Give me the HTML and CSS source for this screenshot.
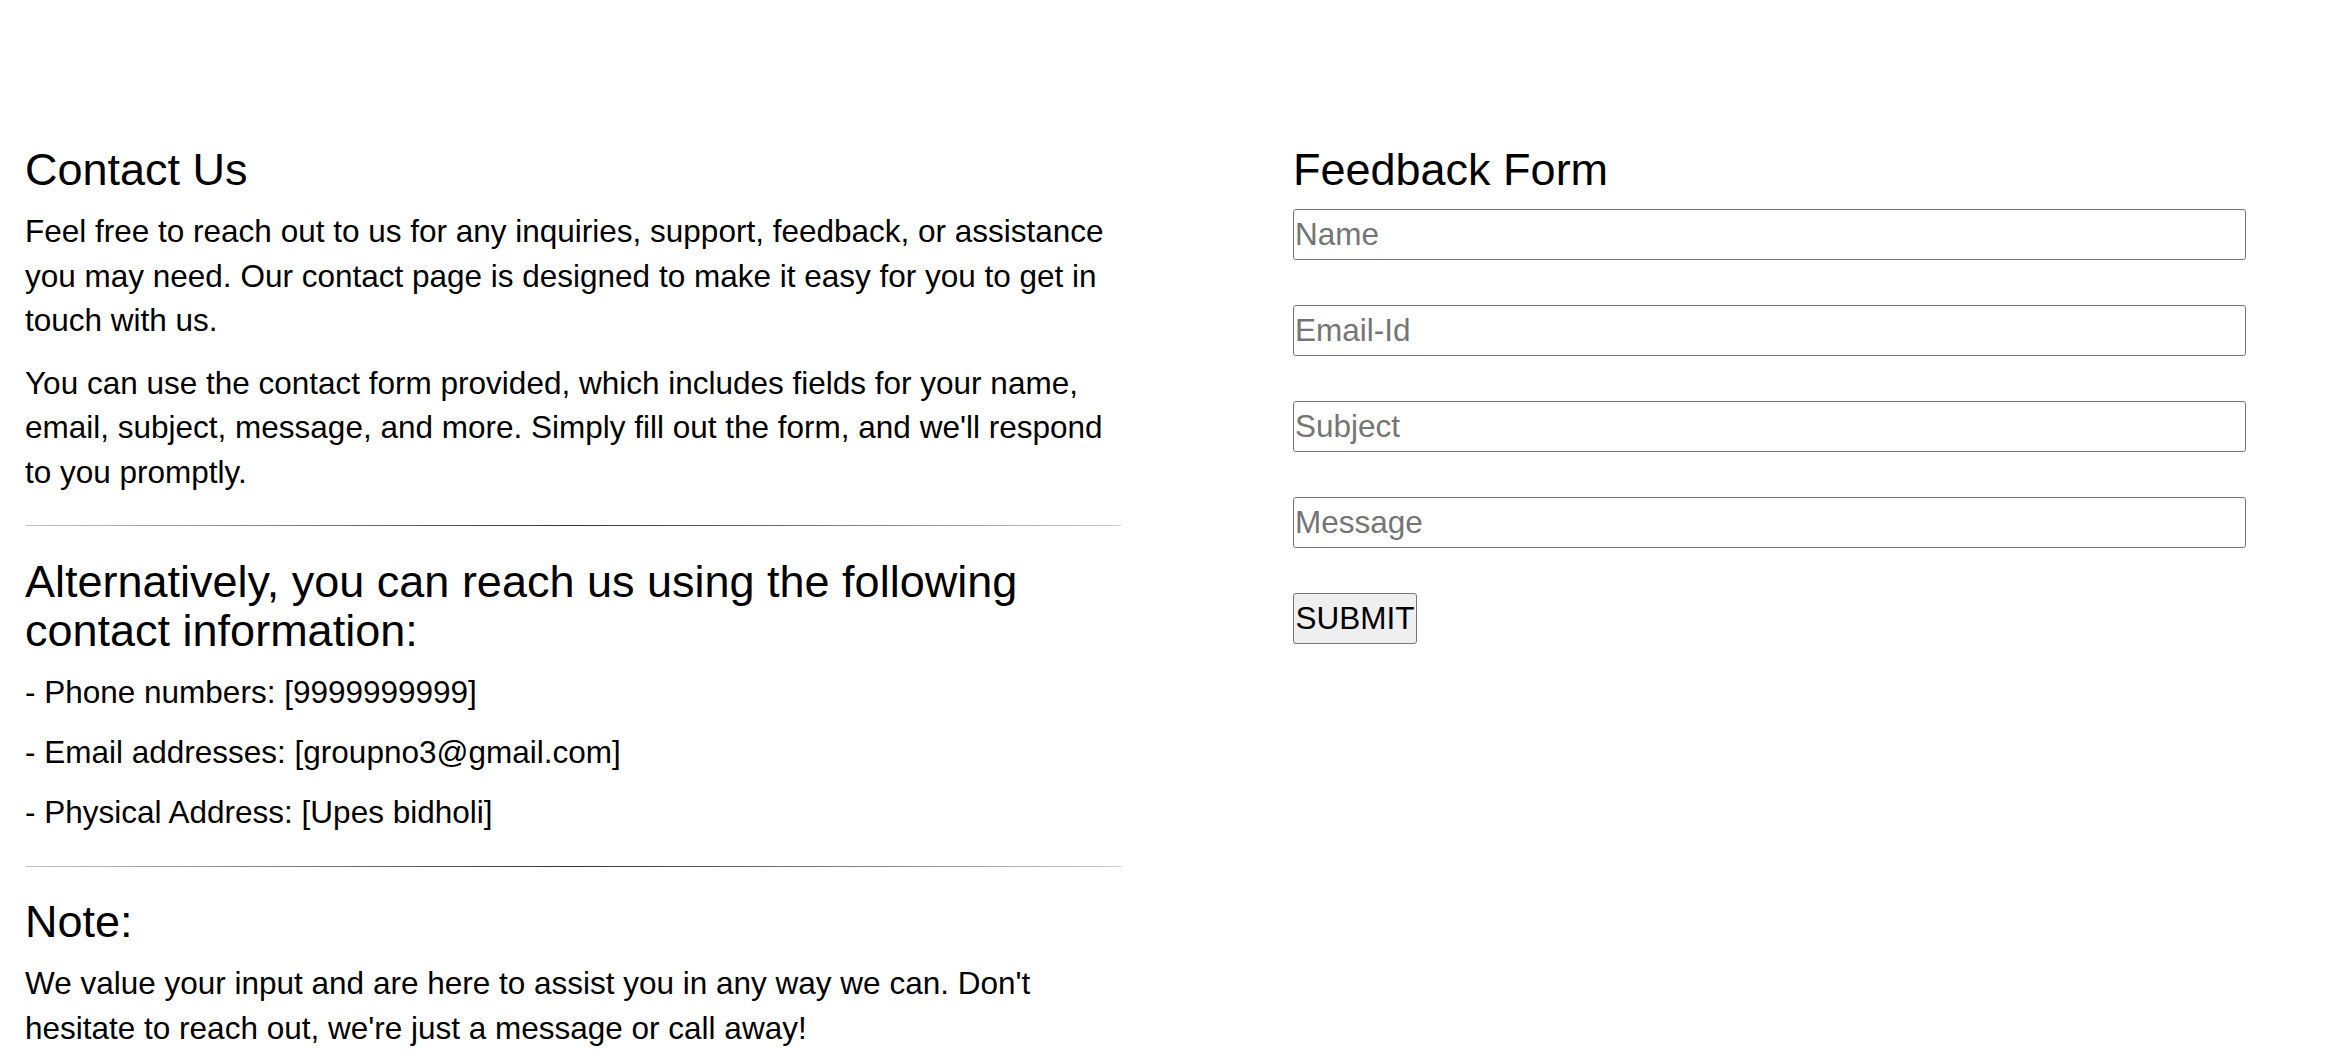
FILE: index.html
```html
<!DOCTYPE html>
<html lang="en">
<head>
<meta charset="utf-8">
<title>Contact Us</title>
<link rel="stylesheet" href="styles.css">
</head>
<body>
<main class="page">
  <section class="info">
    <h2 class="title">Contact Us</h2>
    <p class="text">Feel free to reach out to us for any inquiries, support, feedback, or assistance you may need. Our contact page is designed to make it easy for you to get in touch with us.</p>
    <p class="text">You can use the contact form provided, which includes fields for your name, email, subject, message, and more. Simply fill out the form, and we'll respond to you promptly.</p>
    <hr class="rule">
    <h2 class="title">Alternatively, you can reach us using the following contact information:</h2>
    <ul class="contacts">
      <li class="contact">- Phone numbers: [9999999999]</li>
      <li class="contact">- Email addresses: [groupno3@gmail.com]</li>
      <li class="contact">- Physical Address: [Upes bidholi]</li>
    </ul>
    <hr class="rule">
    <h2 class="title">Note:</h2>
    <p class="text">We value your input and are here to assist you in any way we can. Don't hesitate to reach out, we're just a message or call away!</p>
  </section>
  <section class="feedback">
    <h2 class="title">Feedback Form</h2>
    <form class="form">
      <input class="field" type="text" placeholder="Name">
      <input class="field" type="email" placeholder="Email-Id">
      <input class="field" type="text" placeholder="Subject">
      <input class="field" type="text" placeholder="Message">
      <button class="submit" type="button">SUBMIT</button>
    </form>
  </section>
</main>
</body>
</html>
```
FILE: styles.css
```css
html, body {
  margin: 0;
  padding: 0;
  background: #fff;
}

body {
  font-family: "Liberation Sans", Arial, Helvetica, sans-serif;
  color: #000;
}

.page {
  display: grid;
  grid-template-columns: 1096px 953px;
  column-gap: 172px;
  align-items: start;
  padding: 145.4px 0 0 25px;
}

.title {
  margin: 0;
  font-size: 45px;
  font-weight: normal;
  line-height: 49.5px;
}

.text {
  margin: 14.5px 0 0;
  font-size: 31.5px;
  line-height: 44.5px;
}

.text + .text {
  margin-top: 18px;
}

.rule {
  margin: 31px 0 30.5px;
  border: 0;
  height: 1px;
  background: linear-gradient(to right, #c4c4c4, #333 50%, #cccccc);
}

.contacts {
  list-style: none;
  margin: 14.5px 0 0;
  padding: 0;
}

.contact {
  font-size: 31.5px;
  line-height: 44.5px;
}

.contact + .contact {
  margin-top: 15.5px;
}

.form {
  display: flex;
  flex-direction: column;
  align-items: flex-start;
  gap: 45px;
  margin: 14.4px 0 0;
}

.field {
  width: 953px;
  height: 51px;
  box-sizing: border-box;
  margin: 0;
  padding: 0 1px;
  border: 1px solid #767676;
  border-radius: 3px;
  background: #fff;
  color: #000;
  font-family: "Liberation Sans", Arial, Helvetica, sans-serif;
  font-size: 31.5px;
}

.field::placeholder {
  color: #757575;
}

.submit {
  height: 51px;
  box-sizing: border-box;
  margin: 0;
  padding: 0 1.5px;
  border: 1px solid #767676;
  border-radius: 3px;
  background: #efefef;
  color: #000;
  font-family: "Liberation Sans", Arial, Helvetica, sans-serif;
  font-size: 31.5px;
}
```
